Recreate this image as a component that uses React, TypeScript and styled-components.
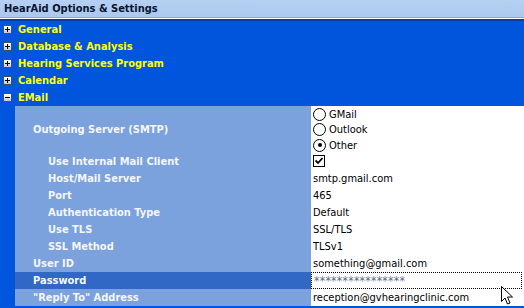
import { Fragment } from 'react';
import styled, { createGlobalStyle } from 'styled-components';

// ---------------------------------------------------------------------------
// Data
// ---------------------------------------------------------------------------

const CATEGORIES: { id: string; label: string; expanded: boolean }[] = [
  { id: 'general', label: 'General', expanded: false },
  { id: 'database', label: 'Database & Analysis', expanded: false },
  { id: 'hsp', label: 'Hearing Services Program', expanded: false },
  { id: 'calendar', label: 'Calendar', expanded: false },
  { id: 'email', label: 'EMail', expanded: true },
];

type Prop = {
  label: string;
  level: 1 | 2;
  value?: string;
  kind?: 'text' | 'check' | 'password';
  selected?: boolean;
};

const EMAIL_PROPS: Prop[] = [
  { label: 'Use Internal Mail Client', level: 2, kind: 'check' },
  { label: 'Host/Mail Server', level: 2, value: 'smtp.gmail.com' },
  { label: 'Port', level: 2, value: '465' },
  { label: 'Authentication Type', level: 2, value: 'Default' },
  { label: 'Use TLS', level: 2, value: 'SSL/TLS' },
  { label: 'SSL Method', level: 2, value: 'TLSv1' },
  { label: 'User ID', level: 1, value: 'something@gmail.com' },
  { label: 'Password', level: 1, value: '****************', kind: 'password', selected: true },
  { label: '"Reply To" Address', level: 1, value: 'reception@gvhearingclinic.com' },
];

const SERVERS = [
  { id: 'gmail', label: 'GMail', checked: false },
  { id: 'outlook', label: 'Outlook', checked: false },
  { id: 'other', label: 'Other', checked: true },
];

// ---------------------------------------------------------------------------
// Styled components
// ---------------------------------------------------------------------------

const FONT = '"DejaVu Sans Condensed", "DejaVu Sans", "Liberation Sans", sans-serif';

const GlobalStyle = createGlobalStyle`
  html, body {
    margin: 0;
    padding: 0;
    background: #ffffff;
  }
  body {
    font-family: ${FONT};
    font-size: 11px;
  }
`;

const Window = styled.div`
  position: relative;
  width: 524px;
  height: 308px;
  overflow: hidden;
  background: #0055dd;
  display: flex;
  flex-direction: column;
`;

const TitleBar = styled.div`
  height: 17px;
  display: flex;
  align-items: center;
  padding-left: 4px;
  background: linear-gradient(#b6d0f2, #abc8ee);
  border-bottom: 1px solid #86a8dc;
  box-shadow: 0 1px 0 #ffffff, 0 3px 0 #0a3aa8;
  margin-bottom: 3px;
  font-weight: bold;
  color: #0a1430;
`;

const CategoryRow = styled.div`
  height: 17px;
  display: flex;
  align-items: center;
  gap: 6px;
  padding-left: 3px;
`;

const ExpandBox = styled.span`
  width: 7px;
  height: 7px;
  border: 1px solid #44506a;
  background: linear-gradient(#ffffff, #c4c8d4);
  display: flex;
  align-items: center;
  justify-content: center;
`;

const CategoryLabel = styled.span`
  color: #ffff00;
  font-weight: bold;
`;

const Section = styled.div`
  display: flex;
  padding-left: 15px;
`;

const Grid = styled.div`
  flex: 1;
  display: grid;
  grid-template-columns: 296px 1fr;
`;

const LabelCell = styled.div<{ $level: number; $selected?: boolean; $tall?: boolean }>`
  height: ${({ $tall }) => ($tall ? '47px' : '17px')};
  display: flex;
  align-items: center;
  padding-left: ${({ $level }) => ($level === 2 ? '33px' : '18px')};
  background: ${({ $selected }) => ($selected ? '#3168c6' : '#7ba2dc')};
  color: #f4f6fb;
  font-weight: bold;
`;

const ValueCell = styled.div<{ $tall?: boolean }>`
  height: ${({ $tall }) => ($tall ? '47px' : '17px')};
  background: #ffffff;
  display: flex;
  align-items: center;
  padding-left: 2px;
  color: #000;
`;

const PasswordBox = styled.div`
  flex: 1;
  align-self: stretch;
  margin-left: -2px;
  margin-right: 2px;
  border: 1px dotted #000;
  display: flex;
  align-items: center;
  padding-left: 2px;
  color: #5b6a8c;
  font-size: 12px;
  letter-spacing: 0.3px;
`;

const RadioList = styled.div`
  display: flex;
  flex-direction: column;
  align-self: flex-start;
  padding-top: 1px;
`;

const RadioLine = styled.label`
  height: 15.3px;
  display: flex;
  align-items: center;
  gap: 3px;
`;

const RadioCircle = styled.span<{ $checked: boolean }>`
  width: 11px;
  height: 11px;
  border: 1px solid #000;
  border-radius: 50%;
  display: flex;
  align-items: center;
  justify-content: center;
  &::after {
    content: '';
    width: 4px;
    height: 4px;
    border-radius: 50%;
    background: ${({ $checked }) => ($checked ? '#000' : 'transparent')};
  }
`;

const CheckBox = styled.span`
  width: 10px;
  height: 10px;
  border: 1px solid #000;
  display: flex;
  align-items: center;
  justify-content: center;
  margin-top: -1px;
`;

const Cursor = styled.svg`
  position: absolute;
  left: 501px;
  top: 286px;
`;

// ---------------------------------------------------------------------------
// App
// ---------------------------------------------------------------------------

export default function App() {
  return (
    <>
      <GlobalStyle />
      <Window>
        <TitleBar>HearAid Options &amp; Settings</TitleBar>

        {CATEGORIES.map((c) => (
          <CategoryRow key={c.id}>
            <ExpandBox>
              <svg width="5" height="5" viewBox="0 0 5 5">
                <path d="M0 2.5 H5" stroke="#000" strokeWidth="1" />
                {!c.expanded && <path d="M2.5 0 V5" stroke="#000" strokeWidth="1" />}
              </svg>
            </ExpandBox>
            <CategoryLabel>{c.label}</CategoryLabel>
          </CategoryRow>
        ))}

        <Section>
          <Grid>
            <LabelCell $level={1} $tall>
              Outgoing Server (SMTP)
            </LabelCell>
            <ValueCell $tall>
              <RadioList>
                {SERVERS.map((s) => (
                  <RadioLine key={s.id}>
                    <RadioCircle $checked={s.checked} />
                    {s.label}
                  </RadioLine>
                ))}
              </RadioList>
            </ValueCell>

            {EMAIL_PROPS.map((p) => (
              <Fragment key={p.label}>
                <LabelCell $level={p.level} $selected={p.selected}>
                  {p.label}
                </LabelCell>
                <ValueCell>
                  {p.kind === 'check' ? (
                    <CheckBox>
                      <svg width="8" height="8" viewBox="0 0 8 8">
                        <path d="M0.5 3.5 L3 6 L7.5 1" stroke="#000" strokeWidth="1.8" fill="none" />
                      </svg>
                    </CheckBox>
                  ) : p.kind === 'password' ? (
                    <PasswordBox>{p.value}</PasswordBox>
                  ) : (
                    p.value
                  )}
                </ValueCell>
              </Fragment>
            ))}
          </Grid>
        </Section>

        <Cursor width="13" height="20" viewBox="0 0 13 20">
          <path
            d="M0.5 0.5 L0.5 15.5 L4 12 L6.5 18 L9 17 L6.5 11 L11.5 11 Z"
            fill="#fff"
            stroke="#000"
            strokeWidth="1"
            strokeLinejoin="round"
          />
        </Cursor>
      </Window>
    </>
  );
}
